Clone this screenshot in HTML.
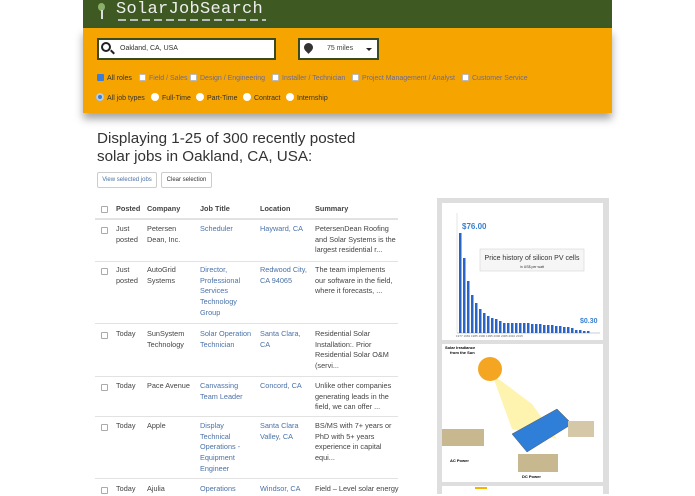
<!DOCTYPE html>
<html><head><meta charset="utf-8"><style>
*{margin:0;padding:0;box-sizing:border-box}
body{width:695px;height:494px;overflow:hidden;background:#fff;font-family:"Liberation Sans",sans-serif;position:relative;color:#333}
.a{position:absolute}
.hdr{left:83px;top:0;width:529px;height:28px;background:#3e5a22}
.org{left:83px;top:28px;width:529px;height:85px;background:#f6a500;box-shadow:0 6px 8px rgba(0,0,0,.35)}
.box{background:#fff;border:2px solid #3c4a1e}
.f7{font-size:7px}
.cb{display:inline-block;width:7px;height:7px;background:#fff;border:1px solid #bbb;border-radius:1px;vertical-align:-1px;margin-right:3px}
.rd{display:inline-block;width:8px;height:8px;background:#fff;border-radius:50%;vertical-align:-1px;margin-right:3px}
.opt{position:absolute;font-size:7px;white-space:nowrap}
.t{position:absolute;font-size:7.3px;line-height:10.7px;color:#444}
.l{color:#4a72a8}
.ln{position:absolute;left:95px;width:303px;height:1px;background:#e2e2e2}
.ck{position:absolute;left:101px;width:7px;height:7px;border:1px solid #aaa;border-radius:1px}
</style></head><body>
<div class="a hdr"></div>
<div class="a" style="left:98px;top:3px;width:7px;height:8px;border-radius:50%;background:#8ab06a"></div>
<div class="a" style="left:101px;top:10px;width:2px;height:9px;background:#ddd"></div>
<div class="a" style="left:116px;top:0px;font-family:'Liberation Mono',monospace;font-size:17px;color:#eee;letter-spacing:.3px">SolarJobSearch</div>
<div class="a" style="left:118px;top:19px;width:148px;height:2px;background:repeating-linear-gradient(90deg,#bbb 0 8px,transparent 8px 12px)"></div>
<div class="a org"></div>
<div class="a box" style="left:97px;top:38px;width:179px;height:22px"></div>
<div class="a" style="left:101px;top:42px;width:10px;height:10px;border:2px solid #222;border-radius:50%"></div>
<div class="a" style="left:110px;top:51px;width:5px;height:2px;background:#222;transform:rotate(45deg)"></div>
<div class="a f7" style="left:120px;top:45px;color:#333">Oakland, CA, USA</div>
<div class="a box" style="left:298px;top:38px;width:81px;height:22px"></div>
<div class="a" style="left:304px;top:43px;width:9px;height:9px;background:#333;border-radius:50% 50% 50% 0;transform:rotate(-45deg)"></div>
<div class="a f7" style="left:327px;top:45px;color:#444">75 miles</div>
<div class="a" style="left:366px;top:48px;border:3px solid transparent;border-top:3px solid #222"></div>
<div class="opt" style="left:97px;top:74px"><span class="cb" style="background:#3b7dd8;border-color:#3b7dd8"></span>All roles</div>
<div class="opt" style="left:139px;top:74px;color:#6a6a9a"><span class="cb"></span>Field / Sales</div>
<div class="opt" style="left:190px;top:74px;color:#6a6a9a"><span class="cb"></span>Design / Engineering</div>
<div class="opt" style="left:272px;top:74px;color:#6a6a9a"><span class="cb"></span>Installer / Technician</div>
<div class="opt" style="left:352px;top:74px;color:#6a6a9a"><span class="cb"></span>Project Management / Analyst</div>
<div class="opt" style="left:462px;top:74px;color:#6a6a9a"><span class="cb"></span>Customer Service</div>
<div class="opt" style="left:96px;top:93px"><span class="rd" style="background:#3b7dd8;box-shadow:inset 0 0 0 2px #bcd"></span>All job types</div>
<div class="opt" style="left:151px;top:93px"><span class="rd"></span>Full-Time</div>
<div class="opt" style="left:196px;top:93px"><span class="rd"></span>Part-Time</div>
<div class="opt" style="left:243px;top:93px"><span class="rd"></span>Contract</div>
<div class="opt" style="left:286px;top:93px"><span class="rd"></span>Internship</div>

<div class="a" style="left:97px;top:130px;font-size:15.2px;line-height:18px;color:#333">Displaying 1-25 of 300 recently posted<br>solar jobs in Oakland, CA, USA:</div>
<div class="a" style="left:97px;top:172px;width:60px;height:16px;border:1px solid #ccc;border-radius:2px;font-size:6px;color:#4a72a8;text-align:center;line-height:14px">View selected jobs</div>
<div class="a" style="left:161px;top:172px;width:51px;height:16px;border:1px solid #ccc;border-radius:2px;font-size:6px;color:#333;text-align:center;line-height:14px">Clear selection</div>

<div class="ck" style="top:206px"></div>
<div class="t" style="left:116px;top:204px;font-weight:bold">Posted</div>
<div class="t" style="left:147px;top:204px;font-weight:bold">Company</div>
<div class="t" style="left:200px;top:204px;font-weight:bold">Job Title</div>
<div class="t" style="left:260px;top:204px;font-weight:bold">Location</div>
<div class="t" style="left:315px;top:204px;font-weight:bold">Summary</div>
<div class="ln" style="top:218px;height:2px"></div>

<div class="ck" style="top:227px"></div>
<div class="t" style="left:116px;top:224px">Just<br>posted</div>
<div class="t" style="left:147px;top:224px">Petersen<br>Dean, Inc.</div>
<div class="t l" style="left:200px;top:224px">Scheduler</div>
<div class="t l" style="left:260px;top:224px">Hayward, CA</div>
<div class="t" style="left:315px;top:224px">PetersenDean Roofing<br>and Solar Systems is the<br>largest residential r...</div>
<div class="ln" style="top:261px"></div>

<div class="ck" style="top:268px"></div>
<div class="t" style="left:116px;top:265px">Just<br>posted</div>
<div class="t" style="left:147px;top:265px">AutoGrid<br>Systems</div>
<div class="t l" style="left:200px;top:265px">Director,<br>Professional<br>Services<br>Technology<br>Group</div>
<div class="t l" style="left:260px;top:265px">Redwood City,<br>CA 94065</div>
<div class="t" style="left:315px;top:265px">The team implements<br>our software in the field,<br>where it forecasts, ...</div>
<div class="ln" style="top:323px"></div>

<div class="ck" style="top:332px"></div>
<div class="t" style="left:116px;top:329px">Today</div>
<div class="t" style="left:147px;top:329px">SunSystem<br>Technology</div>
<div class="t l" style="left:200px;top:329px">Solar Operation<br>Technician</div>
<div class="t l" style="left:260px;top:329px">Santa Clara,<br>CA</div>
<div class="t" style="left:315px;top:329px">Residential Solar<br>Installation:. Prior<br>Residential Solar O&amp;M<br>(servi...</div>
<div class="ln" style="top:376px"></div>

<div class="ck" style="top:384px"></div>
<div class="t" style="left:116px;top:381px">Today</div>
<div class="t" style="left:147px;top:381px">Pace Avenue</div>
<div class="t l" style="left:200px;top:381px">Canvassing<br>Team Leader</div>
<div class="t l" style="left:260px;top:381px">Concord, CA</div>
<div class="t" style="left:315px;top:381px">Unlike other companies<br>generating leads in the<br>field, we can offer ...</div>
<div class="ln" style="top:416px"></div>

<div class="ck" style="top:424px"></div>
<div class="t" style="left:116px;top:421px">Today</div>
<div class="t" style="left:147px;top:421px">Apple</div>
<div class="t l" style="left:200px;top:421px">Display<br>Technical<br>Operations -<br>Equipment<br>Engineer</div>
<div class="t l" style="left:260px;top:421px">Santa Clara<br>Valley, CA</div>
<div class="t" style="left:315px;top:421px">BS/MS with 7+ years or<br>PhD with 5+ years<br>experience in capital<br>equi...</div>
<div class="ln" style="top:478px"></div>

<div class="ck" style="top:487px"></div>
<div class="t" style="left:116px;top:484px">Today</div>
<div class="t" style="left:147px;top:484px">Ajulia</div>
<div class="t l" style="left:200px;top:484px">Operations</div>
<div class="t l" style="left:260px;top:484px">Windsor, CA</div>
<div class="t" style="left:315px;top:484px">Field – Level solar energy</div>

<div class="a" style="left:437px;top:198px;width:172px;height:296px;background:#dedede"></div>
<div class="a" style="left:442px;top:203px;width:161px;height:137px;background:#fff"></div>
<svg class="a" style="left:442px;top:203px" width="161" height="137">
<line x1="15" y1="10" x2="15" y2="130" stroke="#ccc" stroke-width=".5"/>
<line x1="15" y1="130" x2="158" y2="130" stroke="#999" stroke-width=".5"/>
<g fill="#2a64c4">
<rect x="17" y="30" width="2.5" height="100"/><rect x="21" y="55" width="2.5" height="75"/><rect x="25" y="78" width="2.5" height="52"/><rect x="29" y="92" width="2.5" height="38"/><rect x="33" y="100" width="2.5" height="30"/><rect x="37" y="106" width="2.5" height="24"/><rect x="41" y="110" width="2.5" height="20"/><rect x="45" y="113" width="2.5" height="17"/><rect x="49" y="115" width="2.5" height="15"/><rect x="53" y="116" width="2.5" height="14"/><rect x="57" y="118" width="2.5" height="12"/><rect x="61" y="120" width="2.5" height="10"/><rect x="65" y="120" width="2.5" height="10"/><rect x="69" y="120" width="2.5" height="10"/><rect x="73" y="120" width="2.5" height="10"/><rect x="77" y="120" width="2.5" height="10"/><rect x="81" y="120" width="2.5" height="10"/><rect x="85" y="120" width="2.5" height="10"/><rect x="89" y="121" width="2.5" height="9"/><rect x="93" y="121" width="2.5" height="9"/><rect x="97" y="121" width="2.5" height="9"/><rect x="101" y="122" width="2.5" height="8"/><rect x="105" y="122" width="2.5" height="8"/><rect x="109" y="122" width="2.5" height="8"/><rect x="113" y="123" width="2.5" height="7"/><rect x="117" y="123" width="2.5" height="7"/><rect x="121" y="124" width="2.5" height="6"/><rect x="125" y="124" width="2.5" height="6"/><rect x="129" y="125" width="2.5" height="5"/><rect x="133" y="127" width="2.5" height="3"/><rect x="137" y="127" width="2.5" height="3"/><rect x="141" y="128" width="2.5" height="2"/><rect x="145" y="128" width="2.5" height="2"/>
</g>
<text x="20" y="26" font-size="8" font-weight="bold" fill="#3a80d0" font-family="Liberation Sans">$76.00</text>
<text x="138" y="120" font-size="7" font-weight="bold" fill="#3a80d0" font-family="Liberation Sans">$0.30</text>
<rect x="38" y="46" width="104" height="22" fill="#f6f6f6" stroke="#ccc" stroke-width=".5"/>
<text x="90" y="57" font-size="7" fill="#333" text-anchor="middle" font-family="Liberation Sans">Price history of silicon PV cells</text>
<text x="90" y="65" font-size="3.5" fill="#333" text-anchor="middle" font-family="Liberation Sans">in US$ per watt</text>
<text x="14" y="134" font-size="3" fill="#666" font-family="Liberation Sans">1977   1981   1985   1990   1995   2000   2005   2010   2015</text>
</svg>
<div class="a" style="left:442px;top:344px;width:161px;height:138px;background:#fff"></div>
<svg class="a" style="left:442px;top:344px" width="161" height="138">
<polygon points="50,30 90,60 115,95 70,85" fill="#fff3b0"/>
<circle cx="48" cy="25" r="12" fill="#f4a623"/>
<polygon points="70,90 115,65 130,80 85,108" fill="#2f7fd8" stroke="#555" stroke-width=".5"/>
<rect x="0" y="85" width="42" height="17" fill="#c8b890"/>
<rect x="76" y="110" width="40" height="18" fill="#c8b890"/>
<rect x="126" y="77" width="26" height="16" fill="#d4c8a8"/>
<text x="3" y="5" font-size="4" font-weight="bold" font-family="Liberation Sans">Solar Irradiance</text>
<text x="8" y="10" font-size="4" font-weight="bold" font-family="Liberation Sans">from the Sun</text>
<text x="8" y="118" font-size="4" font-weight="bold" font-family="Liberation Sans">AC Power</text>
<text x="80" y="134" font-size="4" font-weight="bold" font-family="Liberation Sans">DC Power</text>
</svg>
<div class="a" style="left:442px;top:486px;width:161px;height:10px;background:#fff"></div>
<div class="a" style="left:475px;top:487px;width:12px;height:7px;border-top:2px solid #f4b400"></div>
</body></html>
